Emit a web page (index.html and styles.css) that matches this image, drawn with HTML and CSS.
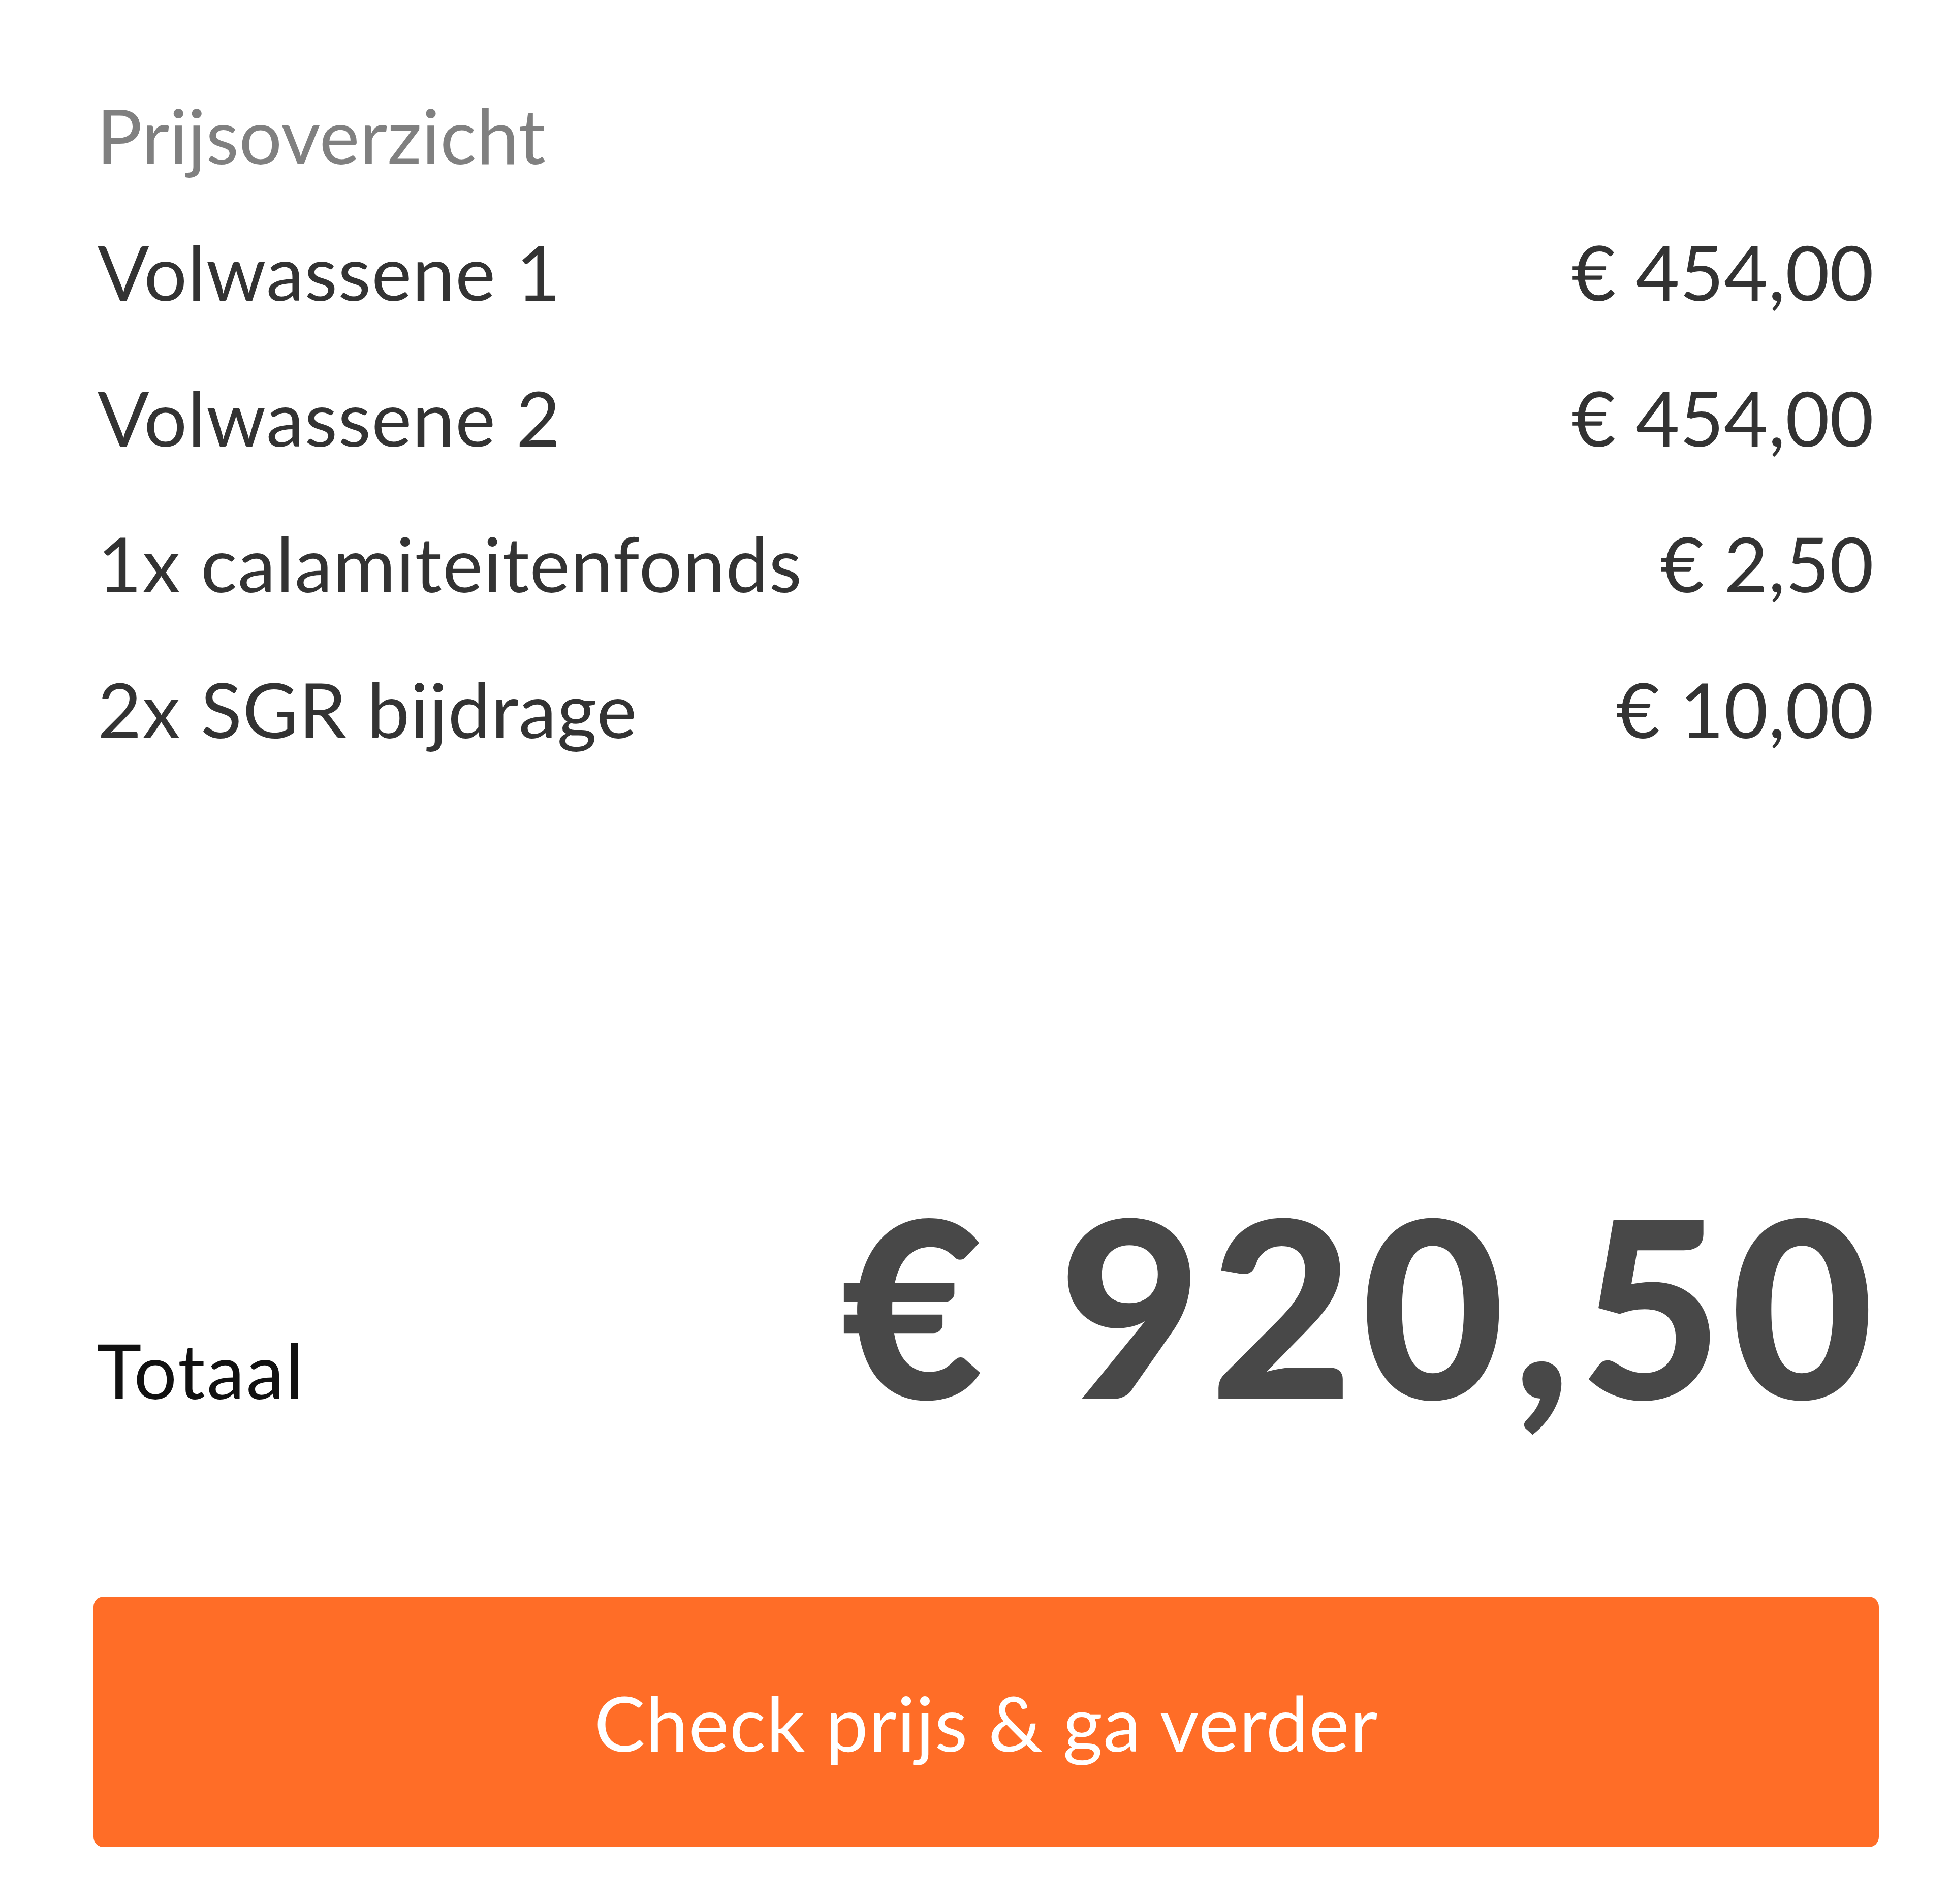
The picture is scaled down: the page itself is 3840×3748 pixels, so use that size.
FILE: index.html
```html
<!DOCTYPE html>
<html lang="nl">
<head>
  <meta charset="UTF-8" />
  <meta name="viewport" content="width=device-width, initial-scale=1" />
  <title>Prijsoverzicht</title>
  <link rel="stylesheet" href="styles.css">
</head>
<body>

  <section class="summary">
    <h2 class="summary-title">Prijsoverzicht</h2>

    <ul class="lines">
      <li class="line"><span>Volwassene 1</span><span class="price">€ 454,00</span></li>
      <li class="line"><span>Volwassene 2</span><span class="price">€ 454,00</span></li>
      <li class="line"><span>1x calamiteitenfonds</span><span class="price">€ 2,50</span></li>
      <li class="line"><span>2x SGR bijdrage</span><span class="price">€ 10,00</span></li>
    </ul>

    <div class="total">
      <span class="total-label">Totaal</span>
      <span class="total-amount">€ 920,50</span>
    </div>

    <button class="next-btn">Check prijs &amp; ga verder</button>
  </section>

</body>
</html>
```

FILE: styles.css
```css
html, body {
  margin: 0;
  background: #fff;
}
body {
  font-family: Lato, "Noto Sans", sans-serif;
  color: #333;
}
.summary {
  padding: 175px 142px 0 184px;
  display: flex;
  flex-direction: column;
}
.summary-title {
  margin: 0;
  padding-left: 6px;
  font-size: 150px;
  font-weight: normal;
  line-height: 180px;
  color: #808080;
}
.lines {
  list-style: none;
  margin: 36px 0 0;
  padding: 0 10px 0 8px;
}
.line {
  display: flex;
  justify-content: space-between;
  font-size: 150px;
  line-height: 287px;
}
.line span:first-child {
  letter-spacing: 1px;
}
.price {
  color: #333;
}
.total {
  margin-top: 784px;
  padding: 0 10px 0 6px;
  display: flex;
  justify-content: space-between;
  align-items: baseline;
}
.total-label {
  font-size: 150px;
  letter-spacing: 3px;
  color: #111;
}
.total-amount {
  font-size: 486px;
  line-height: 1;
  font-weight: 900;
  letter-spacing: 16px;
  margin-right: -16px;
  color: #484848;
}
.next-btn {
  margin-top: 334px;
  height: 493px;
  border: none;
  border-radius: 20px;
  background: #ff6d27;
  color: #fff;
  font-family: inherit;
  font-size: 150px;
  letter-spacing: 1px;
  cursor: pointer;
}
```
